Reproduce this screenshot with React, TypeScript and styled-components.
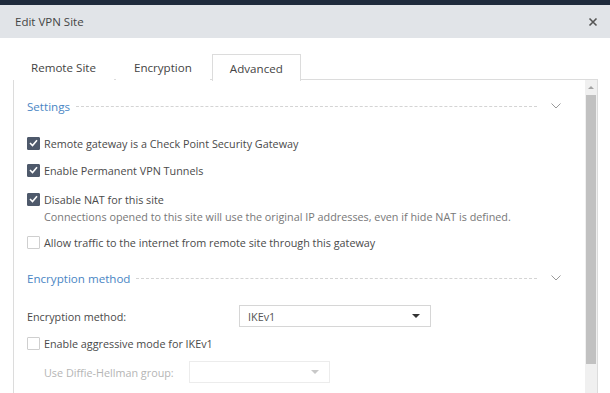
import React from 'react';
import styled, { createGlobalStyle } from 'styled-components';

const GlobalStyle = createGlobalStyle`
  html, body {
    margin: 0;
    padding: 0;
    background: #ffffff;
    font-family: "Open Sans", "Liberation Sans", sans-serif;
    overflow: hidden;
  }
`;

const TopStrip = styled.div`
  height: 5px;
  background: #1f2b3c;
`;

const Header = styled.div`
  height: 33px;
  background: #e1e4e8;
  display: flex;
  align-items: center;
  justify-content: space-between;
  padding: 0 12px 0 15px;
  font-size: 11.5px;
  color: #444;
`;

const CloseButton = styled.button`
  border: none;
  background: none;
  padding: 0;
  width: 10px;
  height: 10px;
  display: flex;
  cursor: pointer;
`;

const Body = styled.div`
  padding: 16px 12px 0 13px;
`;

const TabRow = styled.div`
  display: flex;
  gap: 2px;
  height: 25px;
`;

const Tab = styled.div<{ $active?: boolean }>`
  padding: 0 17px;
  display: flex;
  align-items: center;
  font-size: 11.6px;
  color: #444;
  border: 1px solid ${(p) => (p.$active ? '#dcdcdc' : 'transparent')};
  border-bottom: none;
  background: #fff;
  position: relative;
  z-index: 1;
  height: ${(p) => (p.$active ? '26px' : '25px')};
`;

const Panel = styled.div`
  border: 1px solid #dcdcdc;
  display: flex;
  height: 330px;
`;

const Content = styled.div`
  flex: 1;
  padding: 17px 0 0 13px;
`;

const SectionHeader = styled.div<{ $top?: number }>`
  display: flex;
  align-items: center;
  height: 18px;
  margin-top: ${(p) => p.$top ?? 0}px;
  padding-right: 24px;
`;

const SectionTitle = styled.span`
  color: #4a86c4;
  font-size: 11.6px;
`;

const DashLine = styled.div`
  flex: 1;
  border-top: 1px dashed #d4d4d4;
  margin: 0 14px 0 6px;
`;

const CheckRow = styled.label<{ $top: number; $indent?: number }>`
  display: flex;
  align-items: center;
  height: 16px;
  margin-top: ${(p) => p.$top}px;
  margin-left: ${(p) => p.$indent ?? 0}px;
  font-size: 10.8px;
  color: #4a4a4a;
  gap: 4px;
`;

const Box = styled.span<{ $checked?: boolean }>`
  width: 13px;
  height: 13px;
  box-sizing: border-box;
  border-radius: 1px;
  display: flex;
  align-items: center;
  justify-content: center;
  background: ${(p) => (p.$checked ? '#4e596b' : '#fff')};
  border: 1px solid ${(p) => (p.$checked ? '#4e596b' : '#cfcfcf')};
  flex-shrink: 0;
`;

const HelpText = styled.div`
  margin: 2px 0 0 17px;
  font-size: 10.8px;
  line-height: 16px;
  color: #777;
`;

const FieldRow = styled.div<{ $top: number; $indent?: number; $disabled?: boolean }>`
  display: flex;
  align-items: center;
  margin-top: ${(p) => p.$top}px;
  margin-left: ${(p) => p.$indent ?? 0}px;
  font-size: 10.8px;
  color: ${(p) => (p.$disabled ? '#b5b5b5' : '#4a4a4a')};
`;

const FieldLabel = styled.span<{ $width: number }>`
  width: ${(p) => p.$width}px;
`;

const Select = styled.div<{ $width: number; $disabled?: boolean }>`
  width: ${(p) => p.$width}px;
  height: 22px;
  box-sizing: border-box;
  border: 1px solid ${(p) => (p.$disabled ? '#ececec' : '#d6d6d6')};
  display: flex;
  align-items: center;
  justify-content: space-between;
  padding: 0 10px 0 8px;
  color: #555;
  font-size: 10.8px;
`;

const Caret = styled.span<{ $disabled?: boolean }>`
  width: 0;
  height: 0;
  border-left: 4px solid transparent;
  border-right: 4px solid transparent;
  border-top: 4px solid ${(p) => (p.$disabled ? '#c8c8c8' : '#333')};
`;

const Scrollbar = styled.div`
  width: 12px;
  background: #f0f0f0;
  display: flex;
  flex-direction: column;
  align-items: center;
  padding-top: 3px;
`;

const ScrollArrow = styled.span`
  width: 0;
  height: 0;
  border-left: 3px solid transparent;
  border-right: 3px solid transparent;
  border-bottom: 3px solid #a3a3a3;
  margin: 3px 0 6px;
`;

const Thumb = styled.div`
  width: 10px;
  height: 269px;
  background: #c1c1c1;
`;

const Chevron = () => (
  <svg width="10" height="6" viewBox="0 0 10 6">
    <path d="M0.5 0.5 L5 5 L9.5 0.5" fill="none" stroke="#9a9a9a" strokeWidth="1" />
  </svg>
);

const Check = () => (
  <svg width="9" height="8" viewBox="0 0 9 8">
    <path d="M1 4 L3.5 6.5 L8 1.2" fill="none" stroke="#fff" strokeWidth="1.6" />
  </svg>
);

const CheckItem: React.FC<{ checked?: boolean; top: number; indent?: number; children?: React.ReactNode }> = ({
  checked,
  top,
  indent,
  children,
}) => (
  <CheckRow $top={top} $indent={indent}>
    <Box $checked={checked}>{checked && <Check />}</Box>
    {children}
  </CheckRow>
);

export default function App() {
  return (
    <>
      <GlobalStyle />
      <TopStrip />
      <Header>
        <span>Edit VPN Site</span>
        <CloseButton aria-label="close">
          <svg width="10" height="10" viewBox="0 0 10 10">
            <path d="M1.5 1.5 L8.5 8.5 M8.5 1.5 L1.5 8.5" stroke="#555" strokeWidth="1.6" />
          </svg>
        </CloseButton>
      </Header>
      <Body>
        <TabRow>
          <Tab>Remote Site</Tab>
          <Tab>Encryption</Tab>
          <Tab $active>Advanced</Tab>
        </TabRow>
        <Panel>
          <Content>
            <SectionHeader>
              <SectionTitle>Settings</SectionTitle>
              <DashLine />
              <Chevron />
            </SectionHeader>
            <CheckItem checked top={20}>
              Remote gateway is a Check Point Security Gateway
            </CheckItem>
            <CheckItem checked top={11}>
              Enable Permanent VPN Tunnels
            </CheckItem>
            <CheckItem checked top={13}>
              Disable NAT for this site
            </CheckItem>
            <HelpText>Connections opened to this site will use the original IP addresses, even if hide NAT is defined.</HelpText>
            <CheckItem top={9}>Allow traffic to the internet from remote site through this gateway</CheckItem>

            <SectionHeader $top={19}>
              <SectionTitle>Encryption method</SectionTitle>
              <DashLine />
              <Chevron />
            </SectionHeader>
            <FieldRow $top={18}>
              <FieldLabel $width={212}>Encryption method:</FieldLabel>
              <Select $width={192}>
                IKEv1
                <Caret />
              </Select>
            </FieldRow>
            <CheckItem top={8}>Enable aggressive mode for IKEv1</CheckItem>
            <FieldRow $top={10} $indent={17} $disabled>
              <FieldLabel $width={145}>Use Diffie-Hellman group:</FieldLabel>
              <Select $width={141} $disabled>
                <span />
                <Caret $disabled />
              </Select>
            </FieldRow>
            <CheckItem top={8} indent={17} />
          </Content>
          <Scrollbar>
            <ScrollArrow />
            <Thumb />
          </Scrollbar>
        </Panel>
      </Body>
    </>
  );
}
